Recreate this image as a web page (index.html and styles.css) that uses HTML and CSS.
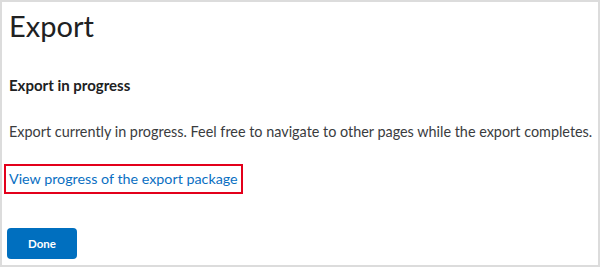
FILE: index.html
```html
<!DOCTYPE html>
<html>
<head>
<meta charset="utf-8">
<link rel="stylesheet" href="styles.css">
</head>
<body>
<div class="frame">
  <h1 class="title">Export</h1>
  <h2 class="subtitle">Export in progress</h2>
  <p class="message">Export currently in progress. Feel free to navigate to other pages while the export completes.</p>
  <div class="highlight"><a class="link" href="#">View progress of the export package</a></div>
  <button class="done">Done</button>
</div>
</body>
</html>
```
FILE: styles.css
```css
html, body {
  margin: 0;
  padding: 0;
  background: #ffffff;
}
.frame {
  box-sizing: border-box;
  width: 600px;
  height: 267px;
  border: 2px solid #dcdcdc;
  padding: 0 0 0 7px;
  font-family: Lato, "Noto Sans", sans-serif;
  color: #202122;
  display: flex;
  flex-direction: column;
  align-items: flex-start;
}
.title {
  margin: 6px 0 0 0;
  font-size: 29px;
  font-weight: 400;
  line-height: 36px;
  color: #202122;
}
.subtitle {
  margin: 31px 0 0 0;
  font-size: 15px;
  font-weight: 700;
  line-height: 20px;
}
.message {
  margin: 27px 0 0 0;
  font-size: 14.4px;
  line-height: 20px;
  color: #3a3c3e;
  white-space: nowrap;
}
.highlight {
  margin: 22px 0 0 -5px;
  border: 2px solid #e3001b;
  padding: 3px 3px 3px 3px;
}
.link {
  display: block;
  font-size: 14.3px;
  line-height: 20px;
  color: #0a6fc2;
  text-decoration: none;
}
.done {
  margin: 34px 0 0 -2px;
  width: 70px;
  height: 31px;
  border: none;
  border-radius: 4px;
  background: #006fbf;
  color: #ffffff;
  font-family: Lato, sans-serif;
  font-weight: 700;
  font-size: 11.5px;
  padding: 0;
}
```
